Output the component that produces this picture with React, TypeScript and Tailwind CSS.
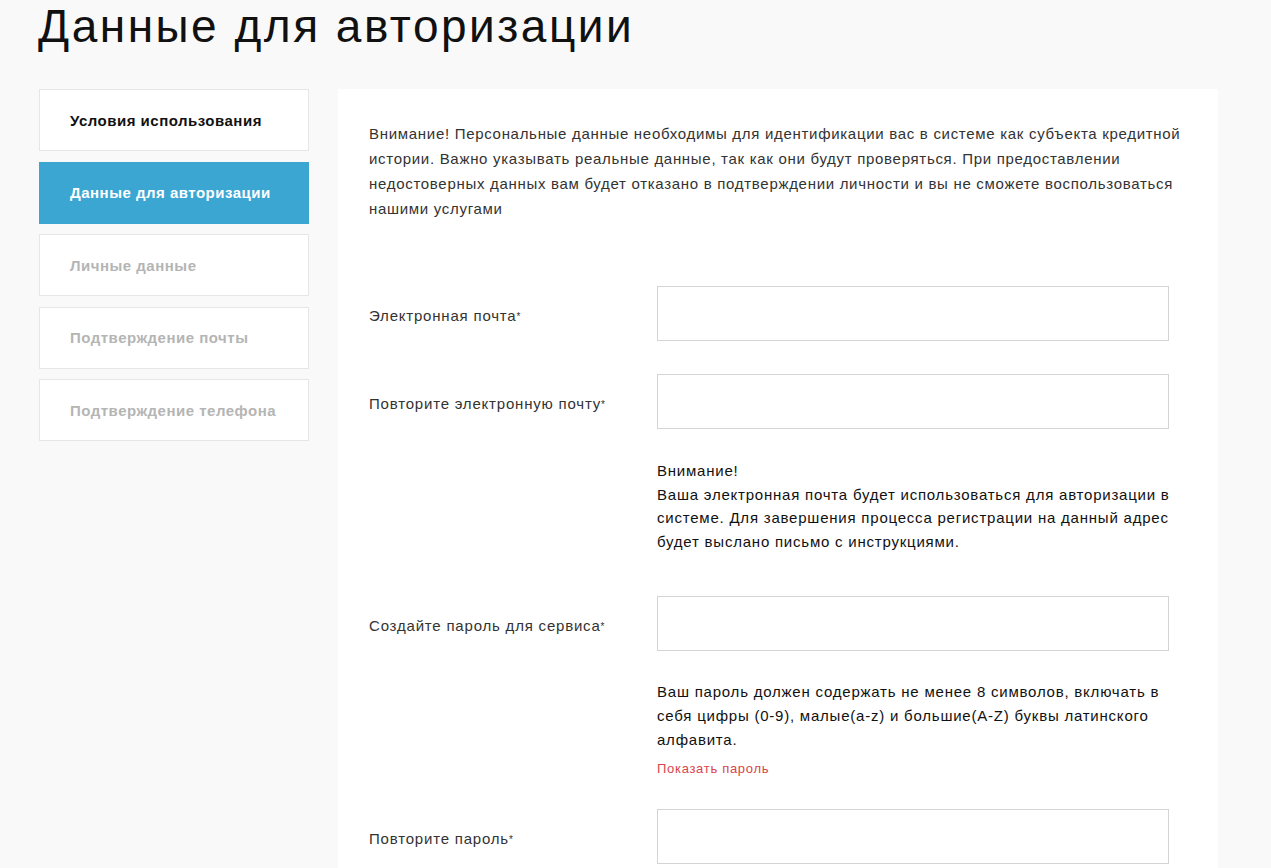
import React from 'react';

const STEPS = [
  { label: 'Условия использования', state: 'done' },
  { label: 'Данные для авторизации', state: 'active' },
  { label: 'Личные данные', state: 'todo' },
  { label: 'Подтверждение почты', state: 'todo' },
  { label: 'Подтверждение телефона', state: 'todo' },
];

const STEP_STYLES: Record<string, string> = {
  done: 'bg-white border border-[#e6e6e6] text-[#111]',
  active: 'bg-[#3ca6d3] border border-[#3ca6d3] text-white',
  todo: 'bg-white border border-[#e6e6e6] text-[#b5b5b5]',
};

function Field({ label }: { label: string }) {
  return (
    <div className="flex items-center">
      <label className="w-[288px] shrink-0 pt-[5px] text-[15px] text-[#333] tracking-[0.8px]">
        {label}
        <sup className="text-[10px] relative top-[-1px]">*</sup>
      </label>
      <input className="w-[512px] h-[55px] border border-[#d4d4d4] bg-white outline-none" />
    </div>
  );
}

export default function App() {
  return (
    <div className="h-[868px] bg-[#f9f9f9] font-['Liberation_Sans',Arial,sans-serif] overflow-hidden">
      <h1 className="pl-[38px] pt-[3px] h-[89px] text-[46px] leading-[46px] text-[#111] tracking-[2.5px]">
        Данные для авторизации
      </h1>

      <div className="flex gap-[29px] pl-[39px]">
        {/* Steps */}
        <div className="w-[270px] shrink-0 flex flex-col gap-[10.5px]">
          {STEPS.map(s => (
            <div
              key={s.label}
              className={`h-[62px] flex items-center pl-[30px] pt-[2px] text-[15px] font-bold tracking-[0.5px] ${STEP_STYLES[s.state]}`}
            >
              {s.label}
            </div>
          ))}
        </div>

        {/* Form panel */}
        <div className="w-[880px] bg-white pl-[31px] pt-[32px] pb-[60px]">
          <p className="w-[820px] text-[15px] leading-[25px] text-[#333] tracking-[0.7px]">
            Внимание! Персональные данные необходимы для идентификации вас в системе как субъекта кредитной
            истории. Важно указывать реальные данные, так как они будут проверяться. При предоставлении
            недостоверных данных вам будет отказано в подтверждении личности и вы не сможете воспользоваться
            нашими услугами
          </p>

          <div className="mt-[65px] flex flex-col gap-[33px]">
            <Field label="Электронная почта" />
            <Field label="Повторите электронную почту" />
          </div>

          <div className="ml-[288px] mt-[30px] w-[516px] text-[15px] leading-[23.7px] font-medium text-[#111] tracking-[0.78px]">
            <p>Внимание!</p>
            <p>
              Ваша электронная почта будет использоваться для авторизации в системе. Для завершения
              процесса регистрации на данный адрес будет выслано письмо с инструкциями.
            </p>
          </div>

          <div className="mt-[42px]">
            <Field label="Создайте пароль для сервиса" />
          </div>

          <div className="ml-[288px] mt-[29px] w-[516px] text-[15px] leading-[24px] font-medium text-[#111] tracking-[0.78px]">
            Ваш пароль должен содержать не менее 8 символов, включать в себя цифры (0-9), малые(a-z) и
            большие(A-Z) буквы латинского алфавита.
          </div>
          <button className="block ml-[288px] mt-[7px] text-[13px] leading-[20px] text-[#d9444a] tracking-[0.7px]">
            Показать пароль
          </button>

          <div className="mt-[30px]">
            <Field label="Повторите пароль" />
          </div>
        </div>
      </div>
    </div>
  );
}
